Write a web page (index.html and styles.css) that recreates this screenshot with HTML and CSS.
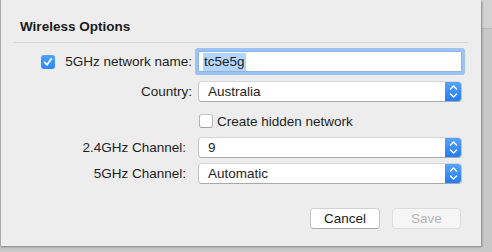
FILE: index.html
```html
<!DOCTYPE html>
<html lang="en">
  <head>
    <meta charset="UTF-8" />
    <title>Wireless Options</title>
    <link rel="stylesheet" href="styles.css">
  </head>
  <body>
    <div class="sheet">
      <!-- Header -->
      <div class="header">
        <h1 class="title">Wireless Options</h1>
      </div>

      <!-- Form rows -->
      <div class="form">
        <div class="row row-name">
          <div class="label">
            <span class="check checked">
              <svg viewBox="0 0 14 14" width="14" height="14"><path d="M3.6 7.4 L6 9.8 L10.4 3.8" fill="none" stroke="#fff" stroke-width="1.8" stroke-linecap="round" stroke-linejoin="round"/></svg>
            </span>
            <span class="label-text">5GHz network name:</span>
          </div>
          <div class="field focused"><span class="selected-text">tc5e5g</span></div>
        </div>

        <div class="row row-country">
          <div class="label"><span class="label-text">Country:</span></div>
          <div class="select">
            <span class="select-value">Australia</span>
            <span class="stepper">
              <svg viewBox="0 0 17 21" width="17" height="21"><path d="M5.5 8 L8.5 5 L11.5 8 M5.5 13 L8.5 16 L11.5 13" fill="none" stroke="#fff" stroke-width="1.4" stroke-linecap="round" stroke-linejoin="round"/></svg>
            </span>
          </div>
        </div>

        <div class="row row-hidden">
          <div class="label"></div>
          <label class="check-line">
            <span class="check"></span>
            <span class="label-text">Create hidden network</span>
          </label>
        </div>

        <div class="row row-ch24">
          <div class="label narrow"><span class="label-text">2.4GHz Channel:</span></div>
          <div class="select">
            <span class="select-value">9</span>
            <span class="stepper">
              <svg viewBox="0 0 17 21" width="17" height="21"><path d="M5.5 8 L8.5 5 L11.5 8 M5.5 13 L8.5 16 L11.5 13" fill="none" stroke="#fff" stroke-width="1.4" stroke-linecap="round" stroke-linejoin="round"/></svg>
            </span>
          </div>
        </div>

        <div class="row row-ch5">
          <div class="label narrow"><span class="label-text">5GHz Channel:</span></div>
          <div class="select">
            <span class="select-value">Automatic</span>
            <span class="stepper">
              <svg viewBox="0 0 17 21" width="17" height="21"><path d="M5.5 8 L8.5 5 L11.5 8 M5.5 13 L8.5 16 L11.5 13" fill="none" stroke="#fff" stroke-width="1.4" stroke-linecap="round" stroke-linejoin="round"/></svg>
            </span>
          </div>
        </div>
      </div>

      <!-- Buttons -->
      <div class="actions">
        <button class="btn">Cancel</button>
        <button class="btn disabled">Save</button>
      </div>
    </div>
  </body>
</html>
```

FILE: styles.css
```css
/* ============ Base ============ */
html,
body {
  margin: 0;
  height: 100%;
  overflow: hidden;
}

body {
  font-family: "Liberation Sans", Arial, sans-serif;
  font-size: 13.5px;
  color: #1e1e1e;
  background: linear-gradient(to bottom, #d2d2d2 0 28px, #b9b9b9 28px 29px, #c8c8c8 29px);
  -webkit-font-smoothing: antialiased;
}

/* ============ Sheet ============ */
.sheet {
  box-sizing: border-box;
  width: 481px;
  height: 246px;
  background: #ededed;
  border-left: 1px solid #a9a9a9;
  box-shadow: 1px 1px 2px rgba(0, 0, 0, 0.35);
}

.header {
  margin-left: 12px;
  width: 455px;
  padding-top: 19px;
  border-bottom: 1px solid #d6d6d6;
}

.title {
  margin: 0;
  padding: 0 0 8px 7px;
  font-size: 13.5px;
  line-height: 15px;
  font-weight: bold;
  color: #1a1a1a;
}

/* ============ Form ============ */
.form {
  padding-top: 8px;
}

.row {
  display: flex;
  align-items: center;
  height: 21px;
}
.row-country {
  margin-top: 9px;
}
.row-hidden {
  margin-top: 11px;
  height: 16px;
}
.row-ch24 {
  margin-top: 8px;
}
.row-ch5 {
  margin-top: 5px;
}

.label {
  box-sizing: border-box;
  width: 191px;
  flex: none;
  display: flex;
  align-items: center;
  justify-content: flex-end;
  margin-right: 6px;
}
.label.narrow {
  padding-right: 6px;
}

.label-text {
  white-space: nowrap;
}

/* ============ Checkbox ============ */
.check {
  box-sizing: border-box;
  width: 14px;
  height: 14px;
  flex: none;
  border-radius: 3px;
  border: 1px solid #b4b4b4;
  border-top-color: #c2c2c2;
  border-bottom-color: #a2a2a2;
  background: #fff;
  display: flex;
  align-items: center;
  justify-content: center;
}
.check.checked {
  border: none;
  background: linear-gradient(#4ca2fd, #2d86f7);
  margin-right: 10px;
}

.check-line {
  display: flex;
  align-items: center;
  gap: 4px;
  padding-left: 1px;
}

/* ============ Text field ============ */
.field {
  box-sizing: border-box;
  width: 264px;
  height: 21px;
  background: #fff;
  border: 1px solid #8db4e8;
  box-shadow: 0 0 0 3px #9cc3f2;
  border-radius: 1px;
  display: flex;
  align-items: center;
  padding-left: 4px;
}

.selected-text {
  background: #b4d5fe;
  padding: 1px 1px;
  line-height: 16px;
}

/* ============ Popup select ============ */
.select {
  box-sizing: border-box;
  width: 264px;
  height: 21px;
  background: #fff;
  border: 1px solid #c7c7c7;
  border-top-color: #d6d6d6;
  border-bottom-color: #a8a8a8;
  border-radius: 4px;
  display: flex;
  align-items: center;
  overflow: hidden;
}

.select-value {
  flex: 1;
  padding-left: 9px;
}

.stepper {
  width: 17px;
  height: 21px;
  flex: none;
  margin-right: -1px;
  background: linear-gradient(#5aa6fb, #2179f5);
  display: flex;
}

/* ============ Buttons ============ */
.actions {
  display: flex;
  justify-content: flex-end;
  gap: 12px;
  margin-top: 24px;
  padding-right: 20px;
}

.btn {
  box-sizing: border-box;
  width: 70px;
  height: 21px;
  padding: 0;
  font-family: inherit;
  font-size: 13.5px;
  color: #1a1a1a;
  background: #fff;
  border: 1px solid #c6c6c6;
  border-top-color: #d0d0d0;
  border-bottom-color: #a9a9a9;
  border-radius: 4px;
}
.btn.disabled {
  width: 69px;
  color: #b5b5b5;
  background: #f6f6f6;
  border-color: #dcdcdc;
}
```
